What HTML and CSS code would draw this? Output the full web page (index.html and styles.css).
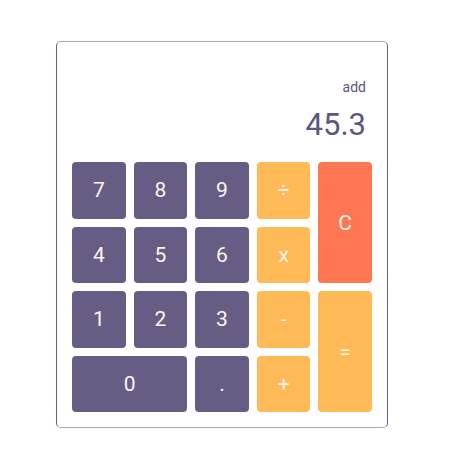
FILE: index.html
```html
<!DOCTYPE html>
<html lang="en">
<head>
    <meta charset="UTF-8">
    <meta name="viewport" content="width=device-width, initial-scale=1.0">
    <title>Calculator</title>
    <link rel="stylesheet" href="styles.css">
</head>
<body>
    <div class="calculator">
        <div class="display">
            <div class="operation">add</div>
            <div class="value">45.3</div>
        </div>

        <div class="keys">
            <button class="key">7</button>
            <button class="key">8</button>
            <button class="key">9</button>
            <button class="key op">÷</button>
            <button class="key clear">C</button>

            <button class="key">4</button>
            <button class="key">5</button>
            <button class="key">6</button>
            <button class="key op">x</button>

            <button class="key">1</button>
            <button class="key">2</button>
            <button class="key">3</button>
            <button class="key op">-</button>
            <button class="key op equals">=</button>

            <button class="key zero">0</button>
            <button class="key">.</button>
            <button class="key op">+</button>
        </div>
    </div>
</body>
</html>
```

FILE: styles.css
```css
body { margin: 0; background: #fff; font-family: Roboto, "Liberation Sans", sans-serif; }

.calculator {
    width: 300px;
    margin: 41px 0 0 56px;
    padding: 0 15px 15px;
    border: 1px solid #675d84;
    border-top-color: #aaa5bd;
    border-bottom-color: #aaa5bd;
    border-radius: 5px;
}

.display { padding: 37px 6px 0 0; text-align: right; color: #5d5480; }
.operation { font-size: 14px; line-height: 17px; }
.value { font-size: 31px; line-height: 36px; margin-top: 11px; }

.keys {
    display: grid;
    grid-template-columns: repeat(5, 1fr);
    grid-template-rows: repeat(4, 56.5px);
    gap: 8px;
    margin-top: 19px;
}

.key {
    border: none;
    border-radius: 4px;
    background: #675d84;
    color: #fbf6ee;
    font-family: Roboto, "Liberation Sans", sans-serif;
    font-size: 21px;
    padding: 0;
}
.key.op { background: #ffb957; }
.key.clear { background: #ff7752; grid-column: 5; grid-row: 1 / 3; }
.key.equals { grid-column: 5; grid-row: 3 / 5; }
.key.zero { grid-column: 1 / 3; }
```
